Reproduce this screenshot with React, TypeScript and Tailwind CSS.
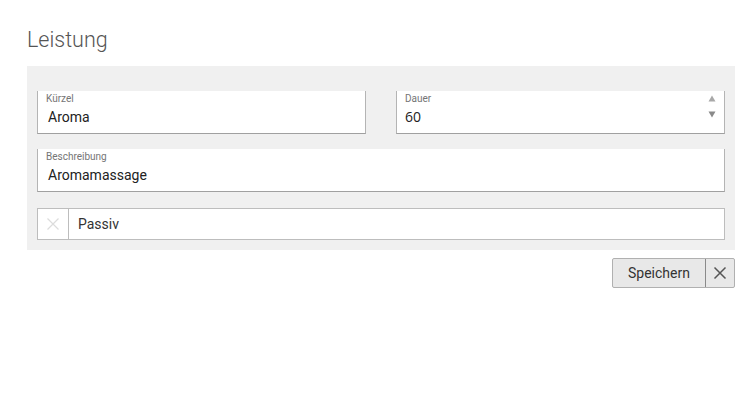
import React from "react";

function Field({ label, value, spin, valuePad }: { label: string; value: string; spin?: boolean; valuePad?: boolean }) {
  return (
    <div className="relative h-[43px] bg-white border-x border-b border-x-[#b4b4b4] border-b-[#a0a0a0]">
      <div className="pl-[8px] pt-[1px] text-[10px] leading-[14px] text-[#757575]">{label}</div>
      <div className={valuePad ? "pl-[8px] text-[14px] leading-[20px] text-[#222] mt-[1px] font-['Open_Sans',sans-serif]" : "pl-[10px] text-[14px] leading-[20px] text-[#222] mt-[1px]"}>{value}</div>
      {spin && (
        <div className="absolute right-[8px] top-[4px] flex flex-col items-center gap-[9px]">
          <svg width="8" height="7" viewBox="0 0 8 7"><path d="M4 0.5 L7.5 6.5 L0.5 6.5 Z" fill="#a8a8a8" /></svg>
          <svg width="8" height="7" viewBox="0 0 8 7"><path d="M0.5 0.5 L7.5 0.5 L4 6.5 Z" fill="#8a8a8a" /></svg>
        </div>
      )}
    </div>
  );
}

export default function App() {
  return (
    <div className="w-[752px] h-[420px] bg-white font-['Roboto',sans-serif] pl-[27px]">
      <div className="pt-[26px] h-[66px] text-[21.5px] leading-[28px] font-light text-[#555]">Leistung</div>
      <div className="w-[708px] bg-[#f0f0f0] px-[10px] pt-[25px] pb-[10px]">
        <div className="grid grid-cols-2 gap-[30px]">
          <Field label="Kürzel" value="Aroma" />
          <Field label="Dauer" value="60" spin valuePad />
        </div>
        <div className="mt-[15px]">
          <Field label="Beschreibung" value="Aromamassage" />
        </div>
        <div className="mt-[16px] h-[32px] flex bg-white border border-[#bdbdbd]">
          <div className="w-[31px] flex items-center justify-center border-r border-[#bdbdbd]">
            <svg width="12" height="12" viewBox="0 0 12 12"><path d="M0.5 0.5 L11.5 11.5 M11.5 0.5 L0.5 11.5" stroke="#dcdcdc" strokeWidth="1.2" /></svg>
          </div>
          <div className="flex items-center pl-[9px] text-[14px] text-[#333]">Passiv</div>
        </div>
      </div>
      <div className="w-[708px] flex justify-end mt-[8px]">
        <div className="flex h-[30px] border border-[#b0b0b0] rounded-[2px] bg-[#e8e8e8]">
          <button className="w-[93px] text-[14px] text-[#333] border-r border-[#8a8a8a]">Speichern</button>
          <button className="w-[28px] flex items-center justify-center">
            <svg width="14" height="14" viewBox="0 0 14 14"><path d="M1.5 1.5 L12.5 12.5 M12.5 1.5 L1.5 12.5" stroke="#555" strokeWidth="1.5" /></svg>
          </button>
        </div>
      </div>
    </div>
  );
}
